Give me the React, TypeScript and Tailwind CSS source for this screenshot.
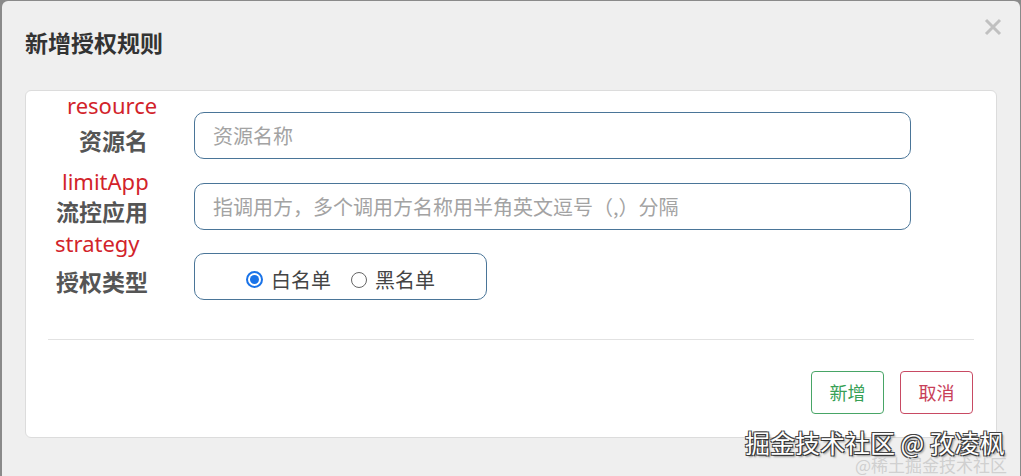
import React from "react";

const cjk = '"Noto Sans CJK SC", "Noto Sans", sans-serif';

function Row({
  label,
  note,
  noteLeft,
  noteTop,
  children,
}: {
  label: string;
  note: string;
  noteLeft: number;
  noteTop: number;
  children: React.ReactNode;
}) {
  return (
    <div className="flex h-[47px] items-stretch">
      <div className="relative flex w-[122px] shrink-0 items-center justify-end pt-[9px]">
        <span
          className="absolute whitespace-nowrap text-[22px] leading-[28px] text-[#d2232a]"
          style={{ left: noteLeft, top: noteTop, fontFamily: '"Noto Sans", sans-serif' }}
        >
          {note}
        </span>
        <span className="text-[23px] font-bold leading-[28px] text-[#555]">{label}</span>
      </div>
      <div className="ml-[46px] flex">{children}</div>
    </div>
  );
}

function Radio({ checked }: { checked?: boolean }) {
  return checked ? (
    <span className="flex h-[17px] w-[17px] items-center justify-center rounded-full border-2 border-[#1a73e8] bg-white">
      <span className="h-[9px] w-[9px] rounded-full bg-[#1a73e8]" />
    </span>
  ) : (
    <span className="h-[16px] w-[16px] rounded-full border-[1.5px] border-[#666] bg-white" />
  );
}

export default function App() {
  return (
    <div
      className="h-[476px] w-[1021px] overflow-hidden bg-[#8a8a8a] pl-[2px] pr-px pt-px"
      style={{ fontFamily: cjk }}
    >
      <div className="relative h-full rounded-t-[6px] bg-[#efefef] px-[23px]">
        <div className="flex items-start justify-between pt-[26px]">
          <h2 className="text-[23px] font-bold leading-[30px] text-[#333]">新增授权规则</h2>
          <button type="button" className="mr-[-5px] mt-[-9px] text-[#c0c0c0]">
            <svg width="18" height="18" viewBox="0 0 18 18">
              <path d="M2 2 L16 16 M16 2 L2 16" stroke="currentColor" strokeWidth="3" />
            </svg>
          </button>
        </div>

        <div className="mt-[33px] rounded-[6px] border border-[#dcdcdc] bg-white">
          <div className="pt-[21px]">
            <Row label="资源名" note="resource" noteLeft={41} noteTop={-21}>
              <input
                placeholder="资源名称"
                className="h-[47px] w-[717px] rounded-[10px] border border-[#4a7598] bg-white px-[18px] text-[20px] text-[#333] outline-none placeholder:text-[#a3a3a3]"
                style={{ fontFamily: cjk }}
              />
            </Row>
            <div className="mt-6">
              <Row label="流控应用" note="limitApp" noteLeft={36} noteTop={-16}>
                <input
                  placeholder="指调用方，多个调用方名称用半角英文逗号（,）分隔"
                  className="h-[47px] w-[717px] rounded-[10px] border border-[#4a7598] bg-white px-[18px] text-[20px] text-[#333] outline-none placeholder:text-[#a3a3a3]"
                  style={{ fontFamily: cjk }}
                />
              </Row>
            </div>
            <div className="mt-[23px]">
              <Row label="授权类型" note="strategy" noteLeft={29} noteTop={-24}>
                <div className="flex h-[47px] w-[293px] items-center justify-center gap-[20px] rounded-[10px] border border-[#4a7598] pt-[6px] text-[20px] text-[#444]">
                  <label className="flex items-center gap-[8px]">
                    <Radio checked />
                    <span>白名单</span>
                  </label>
                  <label className="flex items-center gap-[8px]">
                    <Radio />
                    <span>黑名单</span>
                  </label>
                </div>
              </Row>
            </div>
          </div>

          <div className="mx-[22px] mt-[39px] border-t border-[#e2e2e2]" />

          <div className="flex justify-end gap-[16px] pb-[23px] pr-[23px] pt-[31px]">
            <button
              type="button"
              className="h-[43px] w-[73px] rounded-[4px] border border-[#48a566] bg-white text-[18px] text-[#37a055]"
            >
              新增
            </button>
            <button
              type="button"
              className="h-[43px] w-[73px] rounded-[4px] border border-[#c84a63] bg-white text-[18px] text-[#c84059]"
            >
              取消
            </button>
          </div>
        </div>

        <div
          className="absolute left-[743px] top-[424px] whitespace-nowrap text-[25px] leading-[34px] text-white"
          style={{
            textShadow:
              "1px 1px 0 #333, -1px -1px 0 #444, 1px -1px 0 #444, -1px 1px 0 #444, 2px 2px 2px rgba(0,0,0,0.4)",
          }}
        >
          掘金技术社区 @ 孜凌枫
        </div>
        <div className="absolute left-[853px] top-[453px] whitespace-nowrap text-[17px] leading-[22px] text-[#d0d0d0]">
          @稀土掘金技术社区
        </div>
      </div>
    </div>
  );
}
